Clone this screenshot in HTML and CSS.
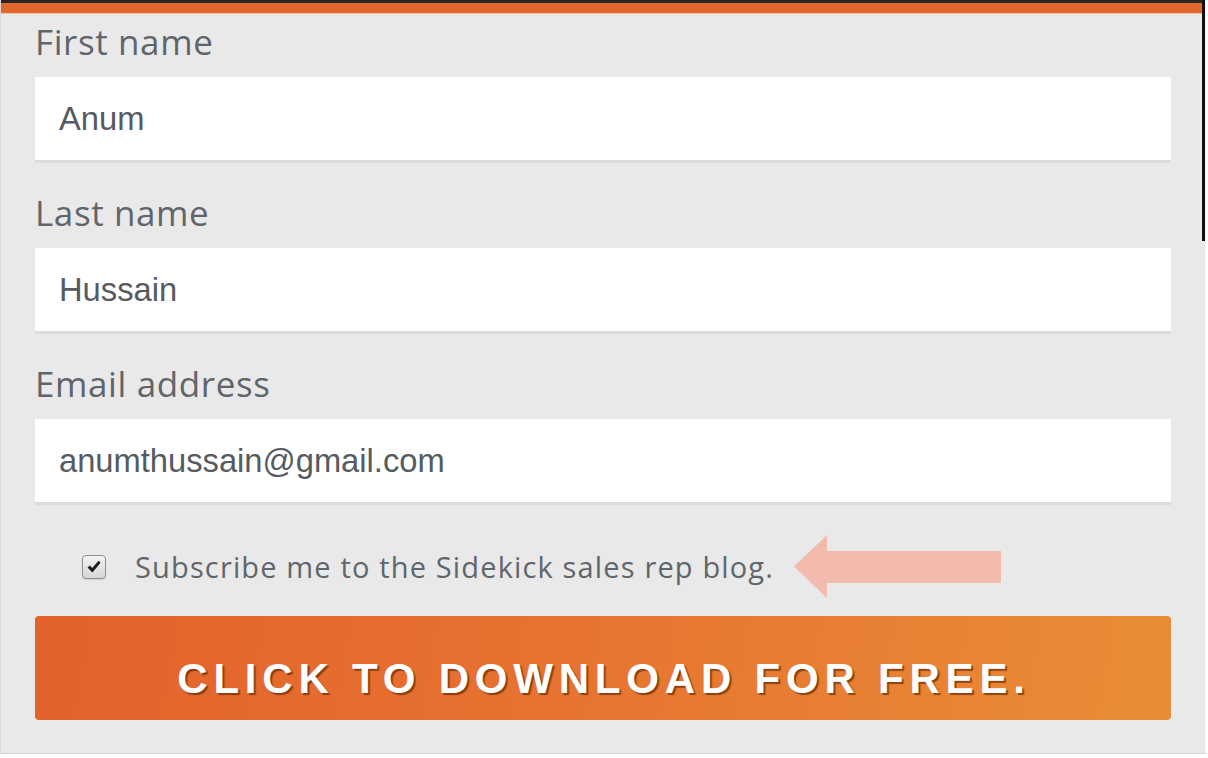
FILE: index.html
```html
<!DOCTYPE html>
<html lang="en">
<head>
<meta charset="utf-8">
<title>Download form</title>
<link rel="stylesheet" href="styles.css">
</head>
<body>
<div class="frame">
  <div class="topbar"></div>
  <form class="form">
    <div class="field">
      <label class="label">First name</label>
      <div class="input">Anum</div>
    </div>
    <div class="field">
      <label class="label">Last name</label>
      <div class="input">Hussain</div>
    </div>
    <div class="field">
      <label class="label">Email address</label>
      <div class="input">anumthussain@gmail.com</div>
    </div>
    <div class="subscribe">
      <span class="checkbox">
        <svg viewBox="0 0 16 16" width="16" height="16"><path d="M1.5 8.6 L4 6.4 L6.2 9 L12.6 1.8 L14.6 3.8 L6.4 13.6 Z" fill="#1e1e1e"/></svg>
      </span>
      <span class="subscribe-text">Subscribe me to the Sidekick sales rep blog.</span>
      <svg class="arrow" viewBox="0 0 207 63" width="207" height="63"><polygon points="0,31.5 33,0 33,16 207,16 207,48 33,48 33,63" fill="#f2bbae"/></svg>
    </div>
    <div class="button">CLICK TO DOWNLOAD FOR FREE.</div>
  </form>
</div>
</body>
</html>
```
FILE: styles.css
```css
html, body {
  margin: 0;
  padding: 0;
  background: #ffffff;
}

.frame {
  box-sizing: border-box;
  width: 1206px;
  padding: 0 34px 33px 34px;
  border-left: 1px solid #dadada;
  border-right: 1px solid #f6f6f6;
  border-bottom: 1px solid #d6d6d6;
  background: linear-gradient(#111111, #111111) no-repeat right top / 3px 241px, #e9e9e9;
}

.topbar {
  height: 10px;
  margin: 0 -31px 0 -34px;
  border-top: 3px solid #2a2522;
  border-bottom: 1px solid #efc2a6;
  background: #e2672d;
}

.form {
  display: flex;
  flex-direction: column;
  padding-top: 8px;
}

.field {
  display: flex;
  flex-direction: column;
  margin-bottom: 33px;
}

.label {
  font-family: "Open Sans", "Liberation Sans", sans-serif;
  font-size: 35px;
  line-height: 40px;
  letter-spacing: 0.6px;
  color: #5f656a;
  margin-bottom: 15px;
}

.input {
  box-sizing: border-box;
  height: 83px;
  background: #ffffff;
  box-shadow: 0 3px 0 #dcdcdc;
  padding-left: 24px;
  display: flex;
  align-items: center;
  font-family: "Liberation Sans", Arial, sans-serif;
  font-size: 32.7px;
  color: #555b60;
}

.subscribe {
  display: flex;
  align-items: center;
  height: 63px;
  padding-left: 47px;
}

.checkbox {
  box-sizing: border-box;
  width: 24px;
  height: 24px;
  border: 1px solid #8f8f8f;
  border-radius: 4px;
  background: linear-gradient(#f4f4f4, #d6d6d6);
  display: flex;
  align-items: center;
  justify-content: center;
  box-shadow: 0 1px 1px rgba(0, 0, 0, 0.12);
}

.subscribe-text {
  margin-left: 29px;
  font-family: "Open Sans", "Liberation Sans", sans-serif;
  font-size: 29px;
  letter-spacing: 1.15px;
  color: #60666b;
}

.arrow {
  margin-left: 20px;
  flex: none;
}

.button {
  margin-top: 18px;
  height: 104px;
  box-sizing: border-box;
  padding: 22px 0 0 2px;
  border-radius: 4px;
  background: linear-gradient(100deg, #e3612c 0%, #e67330 45%, #ea8d36 100%);
  display: flex;
  align-items: center;
  justify-content: center;
  font-family: "Liberation Sans", Arial, sans-serif;
  font-weight: bold;
  font-size: 42px;
  letter-spacing: 5.8px;
  color: #ffffff;
  text-shadow: 2px 2px 1px rgba(110, 45, 5, 0.75);
}
```
